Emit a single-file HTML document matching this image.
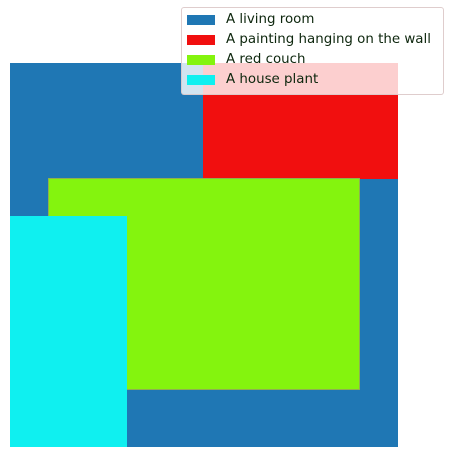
<!DOCTYPE html>
<html><head><style>
body{margin:0;width:450px;height:458px;background:#fff;position:relative;overflow:hidden;font-family:"DejaVu Sans","Liberation Sans",sans-serif;}
div{position:absolute;}
.t{left:44px;font-size:13.4px;color:#0d260d;line-height:14px;white-space:nowrap;}
.s{left:5px;width:28px;height:10px;}
</style></head><body>
<div style="left:10px;top:63px;width:388px;height:384px;background:#1f77b4"></div>
<div style="left:203px;top:63px;width:195px;height:116px;background:#f10f0f"></div>
<div style="left:48px;top:178px;width:312px;height:212px;background:#84f40e;box-shadow:inset 0 0 0 1px #8fb050"></div>
<div style="left:10px;top:216px;width:117px;height:231px;background:#0ff0f0"></div>
<div style="left:181px;top:7px;width:263px;height:88px;background:rgba(255,255,255,0.8);border:1px solid rgba(220,200,200,0.9);border-radius:3px;box-sizing:border-box">
 <div class="s" style="top:7px;background:#1f77b4"></div><div class="t" style="top:5px">A living room</div>
 <div class="s" style="top:27px;background:#f10f0f"></div><div class="t" style="top:25px">A painting hanging on the wall</div>
 <div class="s" style="top:47px;background:#84f40e"></div><div class="t" style="top:45px">A red couch</div>
 <div class="s" style="top:67px;background:#0ff0f0"></div><div class="t" style="top:65px">A house plant</div>
</div>
</body></html>
